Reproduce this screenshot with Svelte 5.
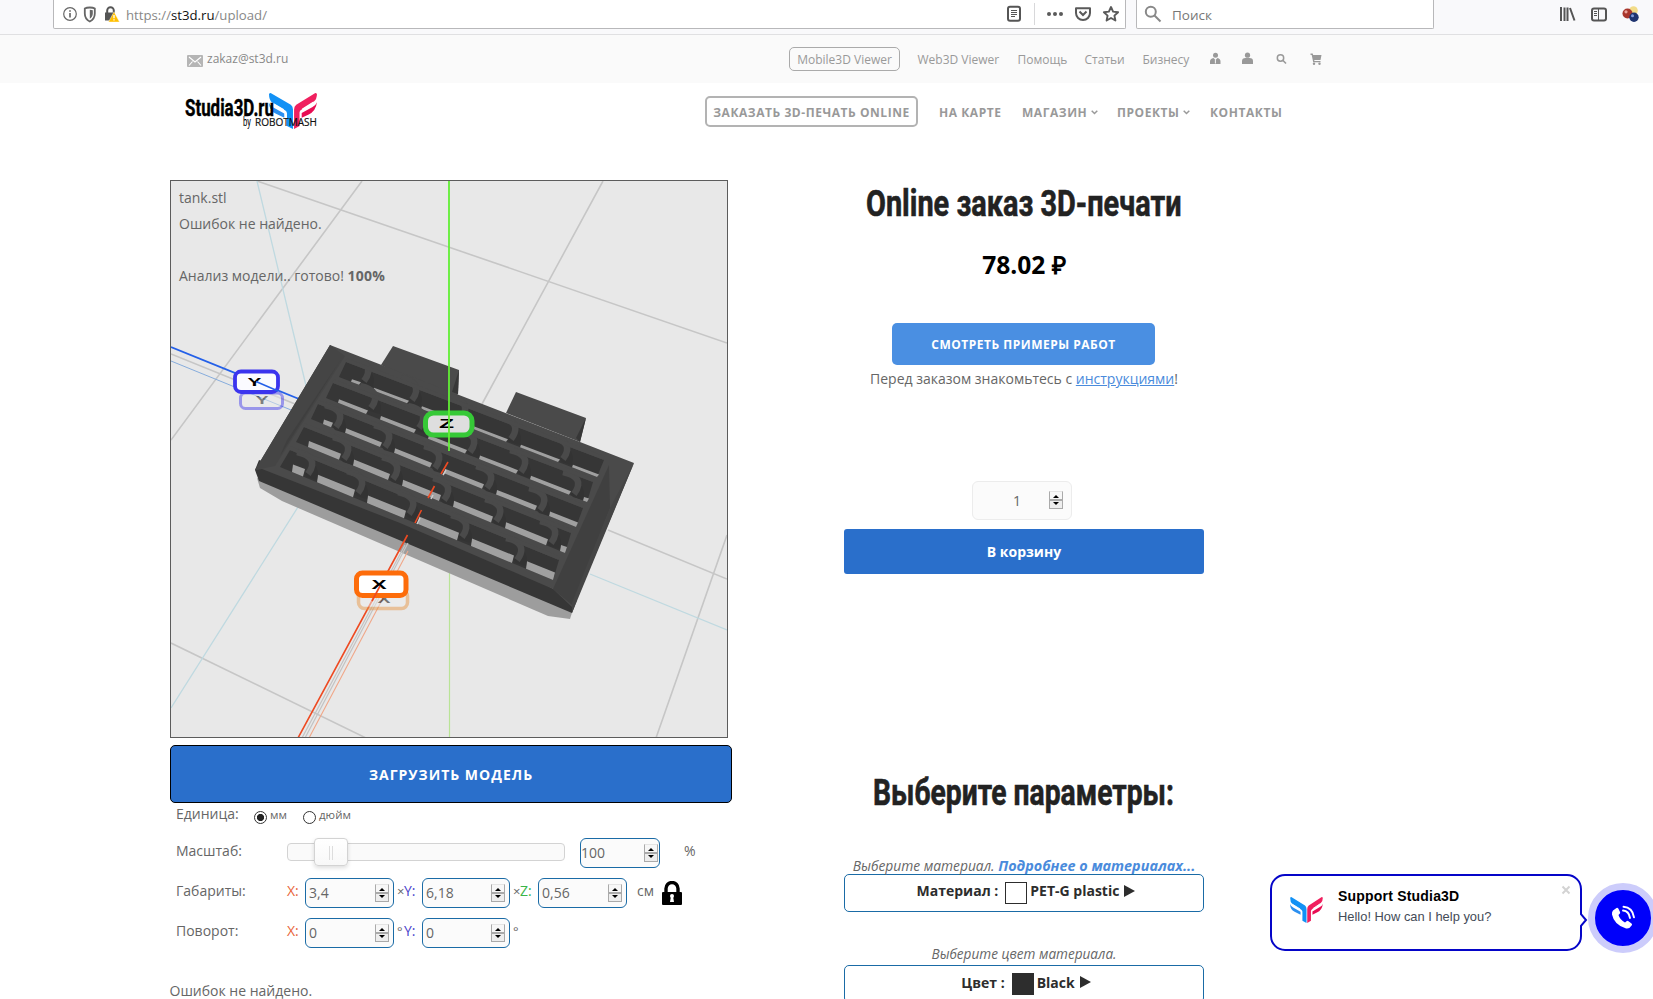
<script>
  const links = [
    { label: 'Web3D Viewer', width: 100 },
    { label: 'Помощь', width: 67 },
    { label: 'Статьи', width: 58 },
    { label: 'Бизнесу', width: 67 }
  ];

  // Rows of openings in the plate: corners, slot dividers and floor thickness.
  const rows = [
    { tl: [346, 362], bl: [339, 377], tr: [604, 460], br: [597, 477], t: 2.5, d: [[370, 373], [418, 392], [467, 411], [517, 431], [569, 451]] },
    { tl: [333, 383], bl: [326, 398], tr: [593, 482], br: [587, 502], t: 3.5, d: [[377, 400], [425, 420], [476, 444], [527, 464], [580, 486]] },
    { tl: [318, 404], bl: [311, 419], tr: [583, 508], br: [576, 527], t: 4.5, d: [[342, 419], [391, 439], [441, 460], [493, 480], [546, 502]] },
    { tl: [304, 427], bl: [296, 442], tr: [571, 533], br: [565, 553], t: 6, d: [[350, 451], [399, 471], [450, 492], [502, 513], [557, 535]] },
    { tl: [290, 450], bl: [280, 467], tr: [559, 560], br: [553, 580], t: 7.5, d: [[314, 466], [364, 485], [415, 506], [468, 529], [523, 552]] }
  ];
  const floorY = (r, x) => r.bl[1] + ((x - r.bl[0]) * (r.br[1] - r.bl[1])) / (r.br[0] - r.bl[0]);
  function floors(r) {
    const edges = [r.bl[0] + 12, ...r.d.map((p) => p[0] + 3)];
    return edges.map((x0, i) => {
      const x1 = i < r.d.length ? r.d[i][0] - 11 : r.br[0];
      if (x1 - x0 < 3) return '';
      const a = floorY(r, x0), b = floorY(r, x1);
      return `${x0},${a} ${x1},${b} ${x1 + 2},${b - r.t} ${x0 + 1},${a - r.t}`;
    }).filter(Boolean);
  }
  const poly = (r) => [r.tl, r.tr, r.br, r.bl].map((p) => p.join(',')).join(' ');
</script>

{#snippet spinner()}
  <span class="spin"><i class="up"></i><i class="down"></i></span>
{/snippet}

{#snippet field(value, cls)}
  <span class="field {cls}"><span>{value}</span>{@render spinner()}</span>
{/snippet}

{#snippet mark()}
  <path d="M1.500 0 L20 11.500 Q22 13 22 16 V35 L16.500 32 V20 Q16.500 18 15 17 L3 9.500 Q0 7 0 1Q.5 0 1.500 0Z" fill="#1291f5" />
  <path d="M0 9.500 Q1 12.500 4 14 L14 20 V24 L6 20 Q0 17 0 9.500Z" fill="#2b8ff0" />
  <path d="M3 9.700L13.500 16.200" stroke="#fff" stroke-width="1.200" />
  <path d="M42.500 0 L25 11.500 Q23 13 23 16 V35 L28 32 V19 Q28 17 30 16 L41 8.500 Q44 6 44 1Q43.500 0 42.500 0Z" fill="#f0205f" />
  <path d="M44 9 Q43 18 36 21 L30 24 V19.500 L40 13.500 Q43 12 44 9Z" fill="#e80d53" />
  <path d="M41 8.700L30.500 15.700" stroke="#fff" stroke-width="1.200" />
{/snippet}

<div class="page">
  <div class="browser">
    <div class="url">
      <svg width="60" height="18" viewBox="0 0 60 18">
        <circle cx="9" cy="9" r="6.300" fill="none" stroke="#666" stroke-width="1.200" /><path d="M9 8v4.500M9 5.200v1.500" stroke="#555" stroke-width="1.500" />
        <path d="M28.800 2.500c-2 0-4 .4-5 1v5c0 4 2 6.500 5 8 3-1.500 5-4 5-8v-5c-1-.6-3-1-5-1z" fill="none" stroke="#666" stroke-width="1.800" /><path d="M28.800 4.800v9c1.900-1.300 3-2.900 3-5.500V5.300z" fill="#666" />
        <g transform="translate(2 0)"><path d="M44.200 8V5.500a3.300 3.300 0 0 1 6.600 0V8" fill="none" stroke="#555" stroke-width="2" /><path d="M42 7.500h9.500v8H42z" fill="#555" />
        <path d="M51 6.800l5.500 10.200H45.500z" fill="#ffbf00" stroke="#fff" stroke-width=".4" /><path d="M51 10v3.200M51 14.200v1.300" stroke="#fff" stroke-width="1.300" /></g>
      </svg>
      <span class="addr">https://<b>st3d.ru</b>/upload/</span>
      <svg class="acts" width="116" height="24" viewBox="0 0 116 24">
        <rect x="2" y="4.800" width="12" height="14" rx="2" fill="none" stroke="#555" stroke-width="2" /><path d="M5 8.500h6M5 10.500h6M5 12.500h6M5 14.500h4" stroke="#555" />
        <path d="M28.500 1v22" stroke="#d8d8da" /><g fill="#5a5a5a"><circle cx="43" cy="12" r="2" /><circle cx="49" cy="12" r="2" /><circle cx="55" cy="12" r="2" /></g>
        <path d="M70 6.200h14v4.800a7 7 0 0 1-14 0z" fill="none" stroke="#5a5a5a" stroke-width="2" stroke-linejoin="round" /><path d="M73.500 9.500L77 13l3.500-3.500" fill="none" stroke="#5a5a5a" stroke-width="2" />
        <path d="M105 5l2.100 4.600 5 .6-3.700 3.400 1 4.900-4.400-2.500-4.400 2.500 1-4.900-3.700-3.400 5-.6z" fill="none" stroke="#5a5a5a" stroke-width="1.900" stroke-linejoin="round" />
      </svg>
    </div>
    <div class="search">
      <svg width="18" height="18" viewBox="0 0 18 18"><circle cx="6.800" cy="6.800" r="5" fill="none" stroke="#888" stroke-width="2" /><path d="M10.500 10.500l6 6" stroke="#888" stroke-width="2" /></svg>
      <span>Поиск</span>
    </div>
    <svg class="tools" width="84" height="20" viewBox="0 0 84 20">
      <path d="M2 3v14M5.500 3.500V17M8.500 3.500V17M11 4l4.500 12.500" stroke="#555" stroke-width="2" />
      <rect x="33" y="4.500" width="14" height="12" rx="2" fill="none" stroke="#555" stroke-width="2" /><path d="M39.500 4.500v12M35 7.500h3M35 9.500h3M35 11.500h3" stroke="#555" />
      <circle cx="74.500" cy="6.500" r="4.300" fill="#f2dc88" /><circle cx="68.500" cy="9.500" r="5" fill="#a9362c" /><circle cx="67" cy="7.800" r="1.600" fill="#e9a39b" /><circle cx="75" cy="13.200" r="4.700" fill="#1f3470" /><circle cx="73.500" cy="11.700" r="1.500" fill="#8199da" />
    </svg>
  </div>

  <div class="topbar">
    <svg class="mail" width="16" height="12" viewBox="0 0 16 12"><rect width="16" height="12" rx="1" fill="#b5b5b5" /><path d="M2 2l6 5 6-5M2 10.500L5.500 6.500M14 10.500L10.500 6.500" fill="none" stroke="#fff" stroke-width="1.100" /></svg>
    <span class="email">zakaz@st3d.ru</span>
    <span class="pill">Mobile3D Viewer</span>
    {#each links as l}<span class="lnk" style="width:{l.width}px">{l.label}</span>{/each}
    <svg width="114" height="14" viewBox="0 0 114 14" fill="#999">
      <circle cx="5.500" cy="3.200" r="2.500" /><path d="M0 12V9.500Q0 6.500 3.500 6L5.500 8 7.500 6Q10.500 6.500 10.500 9.500V12z" /><path d="M5.400 7.500v4" stroke="#fafafa" />
      <circle cx="37.500" cy="3.200" r="2.600" /><path d="M32 12V9Q32 6 35.500 6h4q3.500 0 3.500 3v3z" />
      <circle cx="70.500" cy="6" r="3.200" fill="none" stroke="#999" stroke-width="1.500" /><path d="M72.800 8.300l3.200 3.200" stroke="#999" stroke-width="1.600" />
      <path d="M100.500 1.500h2.200l.5 1.500h8.300l-1 5h-6.300l.3 1h6v1.300h-7.300L101.700 3h-1.200z" /><circle cx="104" cy="11.700" r="1.200" /><circle cx="109.500" cy="11.700" r="1.200" />
    </svg>
  </div>

  <header>
    <svg class="logo" width="133" height="38" viewBox="0 0 133 38">
      <g transform="translate(84 1) scale(1.090 1.030)">{@render mark()}</g>
      <text x="0" y="23.500" class="lg" textLength="89" lengthAdjust="spacingAndGlyphs">Studia3D.ru</text>
      <text x="58" y="34" class="by" textLength="8" lengthAdjust="spacingAndGlyphs">by</text>
      <text x="70" y="34" class="rm" textLength="62" lengthAdjust="spacingAndGlyphs">ROBOTMASH</text>
    </svg>
    <nav>
      <span class="order">ЗАКАЗАТЬ 3D-ПЕЧАТЬ ONLINE</span>
      <span style="width:83px">НА КАРТЕ</span>
      <span style="width:95px">МАГАЗИН<svg width="7" height="5" viewBox="0 0 7 5"><path d="M.7.8l2.800 2.700L6.300.8" fill="none" stroke="#999" stroke-width="1.500" /></svg></span>
      <span style="width:93px">ПРОЕКТЫ<svg width="7" height="5" viewBox="0 0 7 5"><path d="M.7.8l2.800 2.700L6.300.8" fill="none" stroke="#999" stroke-width="1.500" /></svg></span>
      <span>КОНТАКТЫ</span>
    </nav>
  </header>

  <main>
    <section class="left">
      <div class="viewer">
        <svg width="556" height="556" viewBox="171 181 556 556">
          <g stroke="#c6c6c6" stroke-width="1.600" fill="none">
            <path d="M257 181L727 343M362 181L171 440M603 181L482 404M171 354L300 406M608 530L727 579M171 643L366 738M727 535L656 738" />
          </g>
          <path d="M257 181L308 394M298 507L171 708M590 574L727 630" stroke="#bfd9e0" stroke-width="1.300" fill="none" />
          <path d="M171 361L296 412" stroke="#86acdc" stroke-width="1" />
          <path d="M171 347L304 401" stroke="#2460e8" stroke-width="1.800" />
          <path d="M449.500 565V738" stroke="#b9e396" stroke-width="1.200" />
          <polygon points="257,478 260,488 282,501 548,616 570,619 574,606" fill="#9d9d9d" />
          <polygon points="400,515 259,460 255,470 259,481 572,613 577,600" fill="#363636" />
          <polygon points="381,365 393,346 459,370 458,394 452,400" fill="#4a4a4a" />
          <polygon points="459,370 458,394 452,392" fill="#373737" />
          <polygon points="506,413 516,392 586,418 580,442" fill="#4a4a4a" />
          <polygon points="586,418 580,442 576,438" fill="#373737" />
          <polygon points="330,345 634,463 573,608 553,589 400,523 262,469 255,470" fill="#4a4a4a" />
          <polygon points="330,345 345,356 275,466 255,470" fill="#454545" />
          <polygon points="609,465 610,508 572,605 553,589" fill="#404040" />
          <polygon points="634,463 572,613 572,603 610,508" fill="#454545" />
          <polygon points="342,358 338,364 280,456 287,440" fill="#3f3f3f" />
          {#each rows as r}
            <polygon points={poly(r)} fill="#363636" />
            {#each floors(r) as f}<polygon points={f} fill="#a0a0a0" />{/each}
            {#each r.d as [x, y]}
              <path d="M{x + 2} {y}L{x - 9} {y + 8}L{x - 7} {y + 11}L{x + 3} {y + 14}L{x + 4} {y + 6}Z" fill="#333" />
              <path d="M{x - 17} {y - 14}C{x - 3} {y - 11} {x + 3} {y - 4} {x - 6} {y + 8}" fill="none" stroke="#4a4a4a" stroke-width="6.500" />
            {/each}
            <path d="M{r.tl[0]} {r.tl[1] - 2}L{r.tr[0]} {r.tr[1] - 2}" stroke="#4a4a4a" stroke-width="4" />
          {/each}
          <path d="M405 545L302 738M408 543L305 738" stroke="#c3c3c3" stroke-width="1.200" />
          <path d="M408 551L309 738" stroke="#f0a789" stroke-width="1.100" />
          <path d="M446 470L443 475M433 495L431 499M420 518L417 524" stroke="#ccc" stroke-width="1.500" />
          <path d="M448 462L441 474M434.500 486L428 498M421.500 510L415 523M407.500 535L298 738" stroke="#ee4a22" stroke-width="1.600" />
          <g class="ax">
            <g opacity=".45"><rect x="240.500" y="393" width="42" height="15.500" rx="5" fill="#eee" stroke="#3b34ee" stroke-width="3" /><text transform="translate(262 404) scale(1.500 .8)">Y</text></g>
            <rect x="235" y="371.500" width="43" height="20.500" rx="6" fill="#fbfbff" stroke="#3b34ee" stroke-width="3.800" /><text transform="translate(254.500 386) scale(1.600 .9)">Y</text>
            <path d="M256 381.500L278 391" stroke="#2460e8" stroke-width="1.500" />
            <g opacity=".5"><rect x="358.500" y="590" width="49" height="18.500" rx="6" fill="#eee" stroke="#e8994a" stroke-width="3.500" /><text transform="translate(384 603) scale(1.500 .8)">X</text></g>
            <rect x="356.500" y="573" width="49.500" height="22.500" rx="6" fill="#fff" stroke="#fd6c0a" stroke-width="5" /><text transform="translate(379 589) scale(1.750 1.050)">X</text>
            <path d="M380 586L372 601" stroke="#ee4a22" stroke-width="1.600" />
            <rect x="425.500" y="413" width="46.500" height="22" rx="8" fill="#dedede" stroke="#36c937" stroke-width="5" /><text transform="translate(446.500 428) scale(1.900 1)">Z</text>
          </g>
          <path d="M449 181V451" stroke="#61ef35" stroke-width="1.800" />
        </svg>
        <div class="overlay">tank.stl<br />Ошибок не найдено.<br /><br />Анализ модели.. готово! <b>100%</b></div>
      </div>
      <div class="upload">ЗАГРУЗИТЬ МОДЕЛЬ</div>

      <div class="row unit">
        <span class="lab">Единица:</span>
        <span class="radio on"></span><small class="mm">мм</small><span class="radio"></span><small>дюйм</small>
      </div>
      <div class="row">
        <span class="lab">Масштаб:</span>
        <span class="slider"><span class="knob"></span></span>
        {@render field('100', 'pct')}
        <span class="unitp">%</span>
      </div>
      <div class="row">
        <span class="lab">Габариты:</span>
        <span class="x">X:</span>{@render field('3,4', '')}
        <span class="sep">×</span><span class="y">Y:</span>{@render field('6,18', 'mid')}
        <span class="sep">×</span><span class="z">Z:</span>{@render field('0,56', '')}
        <span class="cm">см</span>
        <svg class="lock" width="20" height="24" viewBox="0 0 20 24"><path d="M4 12V7.500a6 6 0 0 1 12 0V12" fill="none" stroke="#000" stroke-width="3.400" /><rect y="11" width="20" height="13" rx="1" /><circle cx="10" cy="15" r="2" fill="#fff" /><path d="M9 15h2l1 6H8z" fill="#fff" /></svg>
      </div>
      <div class="row">
        <span class="lab">Поворот:</span>
        <span class="x">X:</span>{@render field('0', '')}
        <span class="sep">°</span><span class="y">Y:</span>{@render field('0', 'mid')}
        <span class="sep">°</span>
      </div>
      <p class="status">Ошибок не найдено.</p>
    </section>

    <section class="right">
      <svg class="head" width="360" height="50"><text x="22" y="36" textLength="315.500" lengthAdjust="spacingAndGlyphs">Online заказ 3D-печати</text></svg>
      <div class="price">78.02 ₽</div>
      <div class="examples">СМОТРЕТЬ ПРИМЕРЫ РАБОТ</div>
      <div class="note">Перед заказом знакомьтесь с <u>инструкциями</u>!</div>
      <div class="qty"><span>1</span>{@render spinner()}</div>
      <div class="cart">В корзину</div>
      <svg class="head second" width="360" height="50"><text x="29" y="35" textLength="301" lengthAdjust="spacingAndGlyphs">Выберите параметры:</text></svg>
      <div class="hint">Выберите материал. <b>Подробнее о материалах...</b></div>
      <div class="choice"><span>Материал :</span><i class="sw"></i><span>PET-G plastic</span><i class="tri"></i></div>
      <div class="hint two">Выберите цвет материала.</div>
      <div class="choice last"><span>Цвет :</span><i class="sw dark"></i><span>Black</span><i class="tri"></i></div>
    </section>
  </main>

  <div class="chat">
    <svg class="clogo" width="33" height="26" viewBox="0 0 44 35">{@render mark()}</svg>
    <div class="msg"><strong>Support Studia3D</strong><span>Hello! How can I help you?</span></div>
    <svg class="close" width="10" height="10" viewBox="0 0 10 10"><path d="M1.500 1.500l7 7M8.500 1.500l-7 7" stroke="#d3d3d3" stroke-width="2" /></svg>
    <svg class="tip" width="8" height="14" viewBox="0 0 8 14"><path d="M0 0L6 7 0 14" fill="#fff" stroke="#0505c8" stroke-width="2" /></svg>
  </div>
  <div class="call">
    <svg width="26" height="26" viewBox="0 0 26 26"><path d="M3 5.500L6.500 3q1-.5 1.800.5L10 7q.5 1-.3 1.800L8.500 10q1.500 5 6.500 7.500l1.500-1.300q1-.8 2 0l3 2.300q1 .8.300 1.800-2.300 4-6.300 3Q4 19.500 2 9.500q-.3-2.500 1-4z" fill="#fff" /><path d="M13 5.500q6 .5 7 7.500M13.500 1.800q9 .7 10.500 10.500" fill="none" stroke="#fff" stroke-width="1.900" stroke-linecap="round" /></svg>
  </div>
</div>

<style>
  :global(body) { margin: 0; overflow: hidden; background: #fff; }
  .page { position: relative; width: 1653px; height: 999px; overflow: hidden; background: #fff; color: #666; font: 14px/26px "Open Sans", sans-serif; }
  .page :global(*) { box-sizing: border-box; }
  .browser { display: flex; height: 35px; background: #f9f9fb; border-bottom: 1px solid #e0e0e2; padding-left: 53px; }
  .url, .search { height: 29px; background: #fff; border: 1px solid #b8b8ba; border-top: 0; border-radius: 0 0 2px 2px; display: flex; align-items: center; }
  .url { width: 1073px; padding-left: 7px; margin-right: 10px; }
  .addr { margin-left: 5px; font-size: 13.100px; color: #888; padding-top: 2px; }
  .addr { font-size: 13.200px; }
  .addr b { font-weight: 400; color: #111; }
  .acts { margin: 0 3px 0 auto; }
  .search { width: 298px; padding-left: 7px; gap: 10px; font-size: 13.500px; color: #777; }
  .search span { padding-top: 2px; }
  .tools { margin: 4px 0 0 125px; }
  .topbar { height: 48px; background: #fafafa; display: flex; align-items: center; padding-left: 187px; font-size: 12px; color: #999; }
  .mail { margin: 4px 4px 0 0; }
  .email { width: 582px; color: #888; }
  .pill { width: 111px; height: 24px; border: 1px solid #aaa; border-radius: 5px; line-height: 23px; text-align: center; margin-right: 17.500px; }
  .lnk { padding-top: 1px; white-space: nowrap; }
  header { height: 97px; display: flex; }
  .logo { margin: 9px 0 0 185px; overflow: visible; }
  .lg { font: 700 24px Roboto, sans-serif; fill: #000; stroke: #000; stroke-width: .4px; }
  .by { font: 12.500px Roboto, sans-serif; fill: #000; }
  .rm { font: 10.800px "Open Sans", sans-serif; fill: #111; stroke: #111; stroke-width: .2px; }
  nav { margin: 13px 0 0 387px; height: 31px; display: flex; align-items: center; font-weight: 700; font-size: 12px; letter-spacing: .55px; color: #999; white-space: nowrap; }
  nav > span { padding-top: 2px; }
  nav svg { margin: 0 0 2px 4px; }
  .order { width: 213px; height: 31px; border: 2px solid #b3b3b3; border-radius: 5px; line-height: 27px; text-align: center; margin-right: 21px; padding-top: 1px; }
  main { display: flex; padding-left: 170px; }
  .left { width: 562px; }
  .viewer { position: relative; width: 558px; height: 558px; border: 1px solid #5c5c5c; background: #e8e8e8; }
  .viewer > svg { display: block; }
  .overlay { position: absolute; left: 8px; top: 4px; white-space: nowrap; }
  .overlay b { letter-spacing: .25px; }
  .ax text { font: 700 13px "Liberation Sans", sans-serif; text-anchor: middle; fill: #000; }
  .upload { margin-top: 7px; height: 58px; border: 1px solid #000; border-radius: 5px; background: #2a6fcb; color: #fff; font-weight: 700; letter-spacing: 1px; line-height: 57px; text-align: center; }
  .row { display: flex; height: 40px; padding-left: 6px; }
  .unit { margin-top: -2px; height: 37px; }
  .lab { width: 111px; }
  .unit .lab { width: 78px; }
  .radio { width: 13px; height: 13px; border: 1px solid #333; border-radius: 50%; margin-top: 10px; background: #fff; }
  .radio.on { background: radial-gradient(circle, #222 3.200px, #fff 4px); }
  small { font-size: 11.500px; margin-left: 3px; padding-top: 1px; }
  .mm { width: 33px; }
  .slider { width: 278px; height: 18px; margin: 5px 15px 0 0; border: 1px solid #d3d3d3; border-radius: 4px; background: #fafafa; }
  .knob { display: block; width: 34px; height: 28px; margin: -6px 0 0 26px; border: 1px solid #d3d3d3; border-radius: 4px; background: linear-gradient(90deg, transparent 14px, #ddd 14px 15px, transparent 15px 17px, #ddd 17px 18px, transparent 18px), linear-gradient(#fff, #f8f8f8); background-size: 100% 14px, 100% 100%; background-position: 0 7px, 0 0; background-repeat: no-repeat; box-shadow: 0 2px 4px #0002; }
  .field { width: 89px; height: 30px; border: 1px solid #1a6ba6; border-radius: 6px; background: #fbfbfb; display: flex; justify-content: space-between; line-height: 28px; padding: 0 4px 0 3px; }
  .mid { width: 88px; }
  .pct { width: 80px; padding: 0 1px 0 0; }
  .unitp { margin-left: 24px; }
  .spin { width: 14px; height: 18px; margin-top: 5px; border: 1px solid #aaa; border-top-color: #e4e4e4; background: linear-gradient(#f7f7f7 0 7px, #aaa 7px 9px, #eee 9px); display: flex; flex-direction: column; align-items: center; justify-content: space-between; padding: 3px 0; }
  .up, .down { border: 3px solid transparent; border-top-width: 0; border-bottom: 3px solid #000; }
  .down { border-top: 3px solid #000; border-bottom-width: 0; }
  .x { width: 18px; color: #e8643a; }
  .y { width: 18px; color: #4a44cc; }
  .z { width: 18px; color: #3bb54a; }
  .sep { width: 10px; padding-left: 3px; font-size: 13px; }
  .cm { width: 35px; padding-left: 10px; }
  .lock { margin-top: 3px; }
  .status { margin: 20px 0 0; margin-left: -.5px; }
  .right { width: 360px; margin-left: 112px; text-align: center; }
  .head { display: block; overflow: visible; }
  .head text { font: 700 37.500px Roboto, sans-serif; fill: #222; stroke: #222; stroke-width: .6px; }
  .price { margin-top: 18px; font-size: 24.600px; line-height: 34px; font-weight: 700; color: #000; }
  .examples { width: 263px; height: 42px; margin: 41px auto 0 48px; border-radius: 5px; background: #4a8fe2; color: #fff; font-weight: 700; font-size: 12px; letter-spacing: .5px; line-height: 43px; }
  .note { padding-top: 1px; }
  .note u { color: #4a8bdc; }
  .qty { width: 100px; height: 39px; margin: 89px 0 9px 128px; border: 1px solid #ececec; border-radius: 6px; background: #fbfbfb; display: flex; justify-content: space-between; padding: 0 8px 0 40px; line-height: 37px; }
  .qty :global(.spin) { margin-top: 9px; }
  .cart { height: 45px; border-radius: 3px; background: #2a6fcb; color: #fff; font-weight: 700; line-height: 45px; }
  .second { margin-top: 196px; }
  .hint { height: 26px; margin: 33px 0 -5px; font-style: italic; font-size: 13.800px; white-space: nowrap; }
  .hint b { color: #4a8bdc; font-size: 14.400px; line-height: 20px; }
  .two { margin: 29px 0 -2px; font-size: 13.600px; }
  .choice { height: 38px; border: 1px solid #1a6ba6; border-radius: 5px; display: flex; justify-content: center; color: #2d2d2d; font-weight: 700; line-height: 32px; padding-left: 4px; }
  .last { line-height: 34px; }
  .sw { width: 22px; height: 22px; margin: 7px 3px 0 7px; border: 1px solid #2d2d2d; }
  .dark { background: #2d2d2d; }
  .tri { margin: 10px 0 0 5px; height: 12px; border: 6px solid transparent; border-left: 11px solid #2d2d2d; border-right: 0; }
  .chat { position: absolute; left: 1270px; top: 874px; width: 312px; height: 77px; border: 2px solid #0505c8; border-radius: 15px; background: #fff; display: flex; font-family: "Liberation Sans", sans-serif; }
  .clogo { margin: 21px 15px 0 18px; }
  .msg { display: flex; flex-direction: column; line-height: 20px; padding-top: 10px; font-size: 12.900px; color: #444b57; flex: 1; }
  .msg span { padding-top: 1px; }
  .msg strong { font-size: 14px; color: #000; letter-spacing: .2px; }
  .close { margin: 9px 9px 0 0; }
  .tip { position: absolute; left: 308px; top: 37px; }
  .call { position: absolute; left: 1588px; top: 883px; width: 70px; height: 70px; border: 7px solid #ccccfb; border-radius: 50%; background: #0000fa; display: flex; align-items: center; justify-content: center; }
</style>
